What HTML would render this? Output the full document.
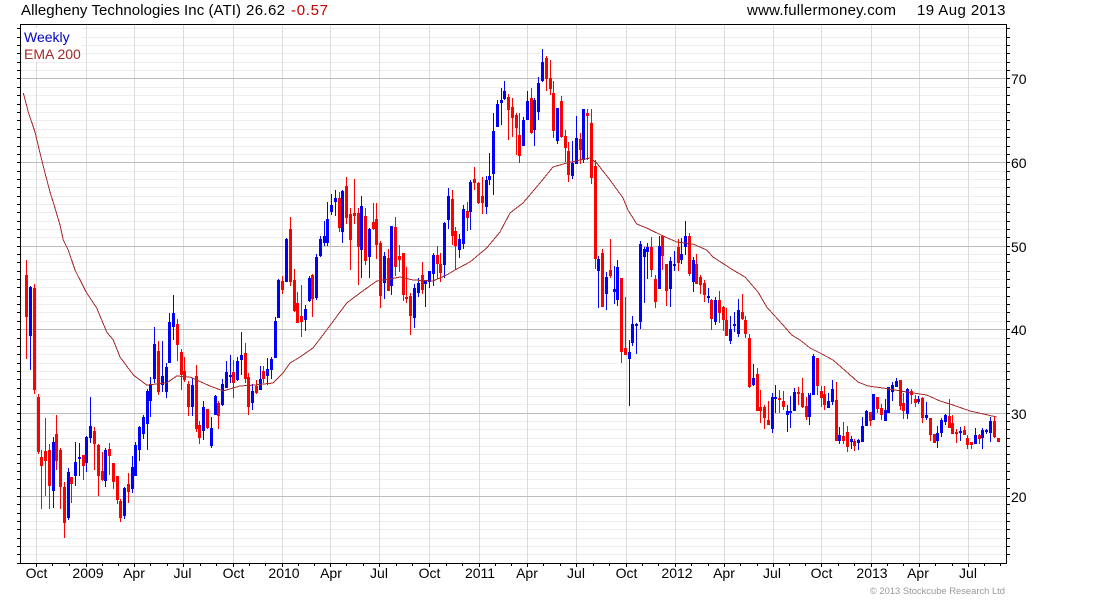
<!DOCTYPE html>
<html><head><meta charset="utf-8"><title>ATI</title>
<style>
html,body{margin:0;padding:0;background:#fff;width:1100px;height:600px;overflow:hidden}
svg{display:block;position:absolute;left:0;top:0}
text{font-family:"Liberation Sans",Arial,sans-serif;font-size:14px;fill:#000}
.c{shape-rendering:crispEdges;fill:none;stroke-width:1}
.m{text-anchor:middle}
</style></head><body>
<svg width="1100" height="600" viewBox="0 0 1100 600" xmlns="http://www.w3.org/2000/svg">
<rect width="1100" height="600" fill="#fff"/>
<path class="c" stroke="#eeeeee" d="M21 554.5H1006M21 546.5H1006M21 538.5H1006M21 529.5H1006M21 521.5H1006M21 513.5H1006M21 504.5H1006M21 488.5H1006M21 479.5H1006M21 471.5H1006M21 463.5H1006M21 454.5H1006M21 446.5H1006M21 438.5H1006M21 429.5H1006M21 421.5H1006M21 404.5H1006M21 396.5H1006M21 388.5H1006M21 379.5H1006M21 371.5H1006M21 363.5H1006M21 354.5H1006M21 346.5H1006M21 338.5H1006M21 321.5H1006M21 312.5H1006M21 304.5H1006M21 296.5H1006M21 287.5H1006M21 279.5H1006M21 271.5H1006M21 262.5H1006M21 254.5H1006M21 237.5H1006M21 229.5H1006M21 221.5H1006M21 212.5H1006M21 204.5H1006M21 196.5H1006M21 187.5H1006M21 179.5H1006M21 171.5H1006M21 154.5H1006M21 146.5H1006M21 137.5H1006M21 129.5H1006M21 120.5H1006M21 112.5H1006M21 104.5H1006M21 95.5H1006M21 87.5H1006M21 70.5H1006M21 62.5H1006M21 53.5H1006M21 45.5H1006M21 37.5H1006M21 28.5H1006"/>
<path class="c" stroke="#dcdcdc" d="M36.5 25V563M86.5 25V563M134.5 25V563M183.5 25V563M233.5 25V563M282.5 25V563M330.5 25V563M379.5 25V563M429.5 25V563M479.5 25V563M527.5 25V563M576.5 25V563M626.5 25V563M675.5 25V563M724.5 25V563M773.5 25V563M821.5 25V563M871.5 25V563M919.5 25V563M968.5 25V563"/>
<path class="c" stroke="#bcbcbc" d="M21 496.5H1006M21 413.5H1006M21 329.5H1006M21 246.5H1006M21 162.5H1006M21 78.5H1006"/>
<rect x="22" y="28" width="60" height="34" fill="#fff"/>

<path class="c" stroke="#0000ff" d="M30.5 286V370M29.5 287V336M31.5 287V336M53.5 437V508M52.5 442V491M54.5 442V491M68.5 468V520M67.5 472V518M69.5 472V518M75.5 442V486M74.5 462V476M76.5 462V476M79.5 443V476M78.5 457V459M80.5 457V459M86.5 436V472M85.5 437V463M87.5 437V463M90.5 397V443M89.5 426V438M91.5 426V438M105.5 448V487M104.5 450V481M106.5 450V481M124.5 487V519M123.5 488V516M125.5 488V516M132.5 456V493M131.5 467V489M133.5 467V489M135.5 442V476M134.5 445V476M136.5 445V476M139.5 426V461M138.5 427V450M140.5 427V450M143.5 415V439M142.5 417V434M144.5 417V434M147.5 389V450M146.5 391V424M148.5 391V424M150.5 377V417M149.5 384V401M151.5 384V401M154.5 327V383M153.5 344V379M155.5 344V379M162.5 341V392M161.5 376V385M163.5 376V385M166.5 363V398M165.5 367V392M167.5 367V392M169.5 313V363M168.5 322V363M170.5 322V363M173.5 295V340M172.5 313V327M174.5 313V327M192.5 378V416M191.5 385V407M193.5 385V407M203.5 401V440M202.5 407V431M204.5 407V431M211.5 417V448M210.5 428V446M212.5 428V446M215.5 395V415M214.5 396V415M216.5 396V415M222.5 379V406M221.5 384V405M223.5 384V405M226.5 361V388M225.5 372V388M227.5 372V388M230.5 355V383M229.5 375V377M231.5 375V377M237.5 357V381M236.5 361V380M238.5 361V380M241.5 332V375M240.5 355V360M242.5 355V360M252.5 384V410M251.5 391V403M253.5 391V403M260.5 366V390M259.5 379V390M261.5 379V390M267.5 358V385M266.5 369V376M268.5 369V376M271.5 357V379M270.5 359V370M272.5 359V370M275.5 317V358M274.5 321V358M276.5 321V358M278.5 279V318M277.5 280V318M279.5 280V318M286.5 238V282M285.5 239V282M287.5 239V282M305.5 305V331M304.5 309V320M306.5 309V320M309.5 276V302M308.5 278V301M310.5 278V301M316.5 254V300M315.5 257V298M317.5 257V298M320.5 236V257M319.5 239V256M321.5 239V256M324.5 221V246M323.5 236V243M325.5 236V243M327.5 202V246M326.5 219V243M328.5 219V243M331.5 194V215M330.5 205V212M332.5 205V212M335.5 190V216M334.5 198V202M336.5 198V202M342.5 190V243M341.5 191V232M343.5 191V232M361.5 196V278M360.5 206V250M362.5 206V250M369.5 228V278M368.5 229V257M370.5 229V257M384.5 252V299M383.5 256V283M385.5 256V283M391.5 226V295M390.5 226V286M392.5 226V286M414.5 284V328M413.5 288V318M415.5 288V318M418.5 278V297M417.5 283V293M419.5 283V293M425.5 280V307M424.5 280V284M426.5 280V284M429.5 271V288M428.5 271V282M430.5 271V282M433.5 253V286M432.5 255V274M434.5 255V274M444.5 222V278M443.5 223V265M445.5 223V265M448.5 188V229M447.5 196V220M449.5 196V220M459.5 234V258M458.5 239V250M460.5 239V250M463.5 205V249M462.5 209V244M464.5 209V244M470.5 180V230M469.5 182V212M471.5 182V212M486.5 176V214M485.5 180V207M487.5 180V207M489.5 153V185M488.5 176V180M490.5 176V180M493.5 113V195M492.5 131V174M494.5 131V174M497.5 100V127M496.5 104V127M498.5 104V127M501.5 88V125M500.5 100V103M502.5 100V103M504.5 81V100M503.5 91V99M505.5 91V99M523.5 117V146M522.5 120V146M524.5 120V146M527.5 91V120M526.5 101V120M528.5 101V120M534.5 98V146M533.5 100V130M535.5 100V130M538.5 77V120M537.5 83V112M539.5 83V112M542.5 49V82M541.5 62V81M543.5 62V81M557.5 108V144M556.5 108V141M558.5 108V141M572.5 141V179M571.5 163V176M573.5 163V176M576.5 116V164M575.5 138V164M577.5 138V164M583.5 109V163M582.5 109V160M584.5 109V160M598.5 256V308M597.5 259V271M599.5 259V271M606.5 272V310M605.5 277V294M607.5 277V294M614.5 266V304M613.5 289V292M615.5 289V292M617.5 260V306M616.5 267V300M618.5 267V300M629.5 340V406M628.5 352V359M630.5 352V359M632.5 316V346M631.5 324V343M633.5 324V343M636.5 323V354M635.5 324V326M637.5 324V326M640.5 241V329M639.5 244V322M641.5 244V322M644.5 247V303M643.5 249V257M645.5 249V257M647.5 243V279M646.5 247V252M648.5 247V252M659.5 236V289M658.5 246V289M660.5 246V289M670.5 257V307M669.5 261V289M671.5 261V289M674.5 251V271M673.5 264V266M675.5 264V266M681.5 238V264M680.5 254V260M682.5 254V260M685.5 221V255M684.5 236V247M686.5 236V247M693.5 257V292M692.5 260V282M694.5 260V282M708.5 288V303M707.5 296V298M709.5 296V298M715.5 297V325M714.5 300V322M716.5 300V322M730.5 316V344M729.5 329V341M731.5 329V341M734.5 312V332M733.5 324V326M735.5 324V326M738.5 299V337M737.5 310V334M739.5 310V334M753.5 364V386M752.5 378V385M754.5 378V385M772.5 393V433M771.5 397V429M773.5 397V429M775.5 385V413M774.5 397V399M776.5 397V399M787.5 405V432M786.5 411V415M788.5 411V415M790.5 396V428M789.5 411V413M791.5 411V413M794.5 388V411M793.5 392V411M795.5 392V411M809.5 395V425M808.5 393V417M810.5 393V417M813.5 354V395M812.5 356V395M814.5 356V395M828.5 393V408M827.5 401V408M829.5 401V408M832.5 380V405M831.5 389V402M833.5 389V402M839.5 427V444M838.5 435V441M840.5 435V441M851.5 436V449M850.5 439V442M852.5 439V442M858.5 439V450M857.5 440V443M859.5 440V443M862.5 417V442M861.5 426V442M863.5 426V442M866.5 410V426M865.5 411V426M867.5 411V426M873.5 394V420M872.5 394V420M874.5 394V420M885.5 399V421M884.5 410V421M886.5 410V421M888.5 387V413M887.5 387V413M889.5 387V413M892.5 382V401M891.5 385V392M893.5 385V392M896.5 378V387M895.5 381V387M897.5 381V387M907.5 388V419M906.5 389V414M908.5 389V414M918.5 396V404M917.5 399V402M919.5 399V402M926.5 402V420M925.5 415V418M927.5 415V418M937.5 426V448M936.5 433V441M938.5 433V441M941.5 418V437M940.5 420V433M942.5 420V433M945.5 414V425M944.5 415V422M946.5 415V422M960.5 427V441M959.5 431V433M961.5 431V433M975.5 428V444M974.5 435V444M976.5 435V444M982.5 428V449M981.5 430V438M983.5 430V438M986.5 429V434M985.5 430V432M987.5 430V432M990.5 417V442M989.5 421V433M991.5 421V433"/>

<path class="c" stroke="#ff0000" d="M26.5 260V359M25.5 275V317M27.5 275V317M34.5 284V394M33.5 288V390M35.5 288V390M38.5 394V454M37.5 397V452M39.5 397V452M41.5 450V509M40.5 457V466M42.5 457V466M45.5 418V496M44.5 451V461M46.5 451V461M49.5 444V509M48.5 450V486M50.5 450V486M56.5 415V470M55.5 434V461M57.5 434V461M60.5 448V509M59.5 450V487M61.5 450V487M64.5 482V538M63.5 487V523M65.5 487V523M71.5 477V503M70.5 477V484M72.5 477V484M83.5 455V480M82.5 455V466M84.5 455V466M94.5 427V470M93.5 431V444M95.5 431V444M98.5 444V496M97.5 445V476M99.5 445V476M102.5 452V481M101.5 471V480M103.5 471V480M109.5 443V475M108.5 449V456M110.5 449V456M113.5 463V489M112.5 463V482M114.5 463V482M117.5 476V504M116.5 476V500M118.5 476V500M120.5 499V522M119.5 501V518M121.5 501V518M128.5 473V503M127.5 484V492M129.5 484V492M158.5 341V395M157.5 351V392M159.5 351V392M177.5 319V361M176.5 324V345M178.5 324V345M181.5 349V390M180.5 352V375M182.5 352V375M184.5 357V382M183.5 371V380M185.5 371V380M188.5 381V416M187.5 384V407M189.5 384V407M196.5 365V432M195.5 376V429M197.5 376V429M199.5 421V444M198.5 425V438M200.5 425V438M207.5 409V429M206.5 409V428M208.5 409V428M218.5 401V429M217.5 403V416M219.5 403V416M233.5 360V398M232.5 372V383M234.5 372V383M245.5 343V383M244.5 353V379M246.5 353V379M248.5 373V415M247.5 377V407M249.5 377V407M256.5 380V394M255.5 386V393M257.5 386V393M263.5 366V383M262.5 371V379M264.5 371V379M282.5 276V294M281.5 281V290M283.5 281V290M290.5 217V286M289.5 229V282M291.5 229V282M294.5 269V312M293.5 280V311M295.5 280V311M297.5 292V323M296.5 303V323M298.5 303V323M301.5 285V337M300.5 316V322M302.5 316V322M312.5 274V317M311.5 275V299M313.5 275V299M339.5 192V232M338.5 198V228M340.5 198V228M346.5 177V224M345.5 186V218M347.5 186V218M350.5 208V270M349.5 214V240M351.5 214V240M354.5 179V224M353.5 213V216M355.5 213V216M358.5 208V285M357.5 213V247M359.5 213V247M365.5 208V265M364.5 216V261M366.5 216V261M373.5 203V230M372.5 222V229M374.5 222V229M376.5 203V259M375.5 219V245M377.5 219V245M380.5 241V308M379.5 243V296M381.5 243V296M388.5 249V291M387.5 258V291M389.5 258V291M395.5 217V276M394.5 227V267M396.5 227V267M399.5 245V272M398.5 256V260M400.5 256V260M403.5 253V301M402.5 253V295M404.5 253V295M406.5 267V303M405.5 297V299M407.5 297V299M410.5 293V335M409.5 296V316M411.5 296V316M422.5 262V294M421.5 275V290M423.5 275V290M437.5 246V279M436.5 255V264M438.5 255V264M440.5 253V282M439.5 264V273M441.5 264V273M452.5 190V245M451.5 199V236M453.5 199V236M455.5 227V270M454.5 231V246M456.5 231V246M467.5 202V231M466.5 211V218M468.5 211V218M474.5 167V190M473.5 179V183M475.5 179V183M478.5 182V204M477.5 183V203M479.5 183V203M482.5 177V214M481.5 196V203M483.5 196V203M508.5 94V140M507.5 97V110M509.5 97V110M512.5 98V137M511.5 107V118M513.5 107V118M516.5 113V155M515.5 115V128M517.5 115V128M519.5 113V163M518.5 135V156M520.5 135V156M531.5 88V134M530.5 98V133M532.5 98V133M546.5 56V91M545.5 58V79M547.5 58V79M550.5 60V95M549.5 78V89M551.5 78V89M553.5 81V138M552.5 93V131M554.5 93V131M561.5 96V138M560.5 101V137M562.5 101V137M565.5 130V162M564.5 136V148M566.5 136V148M568.5 142V182M567.5 151V175M569.5 151V175M580.5 133V164M579.5 139V150M581.5 139V150M587.5 109V160M586.5 113V116M588.5 113V116M591.5 109V184M590.5 123V178M592.5 123V178M595.5 160V269M594.5 166V259M596.5 166V259M602.5 249V307M601.5 253V307M603.5 253V307M610.5 239V278M609.5 270V276M611.5 270V276M621.5 278V363M620.5 278V352M622.5 278V352M625.5 297V355M624.5 348V355M626.5 348V355M651.5 237V277M650.5 247V270M652.5 247V270M655.5 275V308M654.5 279V302M656.5 279V302M662.5 235V270M661.5 236V256M663.5 236V256M666.5 264V306M665.5 264V291M667.5 264V291M678.5 239V271M677.5 247V263M679.5 247V263M689.5 233V276M688.5 236V274M690.5 236V274M696.5 254V284M695.5 264V284M697.5 264V284M700.5 275V294M699.5 277V285M701.5 277V285M704.5 280V302M703.5 283V295M705.5 283V295M711.5 299V330M710.5 300V319M712.5 300V319M719.5 291V323M718.5 300V313M720.5 300V313M723.5 306V331M722.5 307V320M724.5 307V320M726.5 308V336M725.5 320V336M727.5 320V336M742.5 294V320M741.5 312V319M743.5 312V319M745.5 316V338M744.5 320V334M746.5 320V334M749.5 334V388M748.5 338V387M750.5 338V387M757.5 368V411M756.5 374V411M758.5 374V411M760.5 390V423M759.5 407V411M761.5 407V411M764.5 405V429M763.5 407V418M765.5 407V418M768.5 401V425M767.5 420V425M769.5 420V425M779.5 390V413M778.5 398V400M780.5 398V400M783.5 391V410M782.5 401V407M784.5 401V407M798.5 387V405M797.5 392V394M799.5 392V394M802.5 378V408M801.5 393V407M803.5 393V407M806.5 397V420M805.5 406V417M807.5 406V417M817.5 358V395M816.5 358V386M818.5 358V386M821.5 386V407M820.5 391V398M822.5 391V398M824.5 386V410M823.5 394V405M825.5 394V405M836.5 382V441M835.5 400V441M837.5 400V441M843.5 422V444M842.5 436V441M844.5 436V441M847.5 426V452M846.5 432V447M848.5 432V447M854.5 439V451M853.5 441V446M855.5 441V446M870.5 412V426M869.5 412V421M871.5 412V421M877.5 397V413M876.5 397V409M878.5 397V409M881.5 404V420M880.5 408V415M882.5 408V415M900.5 380V410M899.5 380V406M901.5 380V406M903.5 393V419M902.5 403V411M904.5 403V411M911.5 389V404M910.5 391V395M912.5 391V395M915.5 395V407M914.5 399V403M916.5 399V403M922.5 397V423M921.5 398V418M923.5 398V418M930.5 418V441M929.5 418V435M931.5 418V435M934.5 434V443M933.5 434V443M935.5 434V443M949.5 399V428M948.5 416V428M950.5 416V428M952.5 415V434M951.5 423V434M953.5 423V434M956.5 429V443M955.5 432V434M957.5 432V434M964.5 426V435M963.5 430V435M965.5 430V435M967.5 435V449M966.5 438V445M968.5 438V445M971.5 442V449M970.5 442V445M972.5 442V445M979.5 434V444M978.5 435V439M980.5 435V439M994.5 417V438M993.5 421V437M995.5 421V437M998.5 438V442M997.5 438V442M999.5 438V442"/>

<polyline class="c" stroke="#a52a2a" stroke-width="1.3" points="23.3,93 28.3,112 35,132 40,153 45,173 50,192 55,208 60,225 63.3,240 68.3,250 75,270 86.7,293 96.7,308 106.7,332 113.3,340 120,357 133.3,375 146.7,385 156.7,384 166.7,383 176.7,376 190,377 210,386 223.3,391 233,388 240,386 255,385 273,383 283,373 290,363 300,357 313,348 326.7,330 346.7,303 360,293 376.7,281 390,279 400,277 413,280 433,281 446.7,275 456.7,269 470,262 486.7,248 500,232 510,213 523,203 540,183 553,167 566.7,163 580,160 590,158 596.7,163 610,180 623,198 628,210 636.7,224 646.7,228 663,236 676.7,242 693,244 706.7,250 713,257 733,270 745,277 758,292 766.7,307 783,325 791.7,335 800,340 810,348 820,353 833,360 846.7,372 858,382 868,386 883,388 906.7,392 926.7,395 940,401 953,405 970,411 996.7,417"/>

<path class="c" stroke="#000" d="M20.5 24.5H1006.5V563.5H20.5ZM17 554.5H20M17 546.5H20M17 538.5H20M17 529.5H20M17 521.5H20M17 513.5H20M17 504.5H20M17 496.5H20M17 488.5H20M17 479.5H20M17 471.5H20M17 463.5H20M17 454.5H20M17 446.5H20M17 438.5H20M17 429.5H20M17 421.5H20M17 413.5H20M17 404.5H20M17 396.5H20M17 388.5H20M17 379.5H20M17 371.5H20M17 363.5H20M17 354.5H20M17 346.5H20M17 338.5H20M17 329.5H20M17 321.5H20M17 312.5H20M17 304.5H20M17 296.5H20M17 287.5H20M17 279.5H20M17 271.5H20M17 262.5H20M17 254.5H20M17 246.5H20M17 237.5H20M17 229.5H20M17 221.5H20M17 212.5H20M17 204.5H20M17 196.5H20M17 187.5H20M17 179.5H20M17 171.5H20M17 162.5H20M17 154.5H20M17 146.5H20M17 137.5H20M17 129.5H20M17 120.5H20M17 112.5H20M17 104.5H20M17 95.5H20M17 87.5H20M17 78.5H20M17 70.5H20M17 62.5H20M17 53.5H20M17 45.5H20M17 37.5H20M17 28.5H20M17 563.5H20M1007 554.5H1010M1007 546.5H1010M1007 538.5H1010M1007 529.5H1010M1007 521.5H1010M1007 513.5H1010M1007 504.5H1010M1007 496.5H1010M1007 488.5H1010M1007 479.5H1010M1007 471.5H1010M1007 463.5H1010M1007 454.5H1010M1007 446.5H1010M1007 438.5H1010M1007 429.5H1010M1007 421.5H1010M1007 413.5H1010M1007 404.5H1010M1007 396.5H1010M1007 388.5H1010M1007 379.5H1010M1007 371.5H1010M1007 363.5H1010M1007 354.5H1010M1007 346.5H1010M1007 338.5H1010M1007 329.5H1010M1007 321.5H1010M1007 312.5H1010M1007 304.5H1010M1007 296.5H1010M1007 287.5H1010M1007 279.5H1010M1007 271.5H1010M1007 262.5H1010M1007 254.5H1010M1007 246.5H1010M1007 237.5H1010M1007 229.5H1010M1007 221.5H1010M1007 212.5H1010M1007 204.5H1010M1007 196.5H1010M1007 187.5H1010M1007 179.5H1010M1007 171.5H1010M1007 162.5H1010M1007 154.5H1010M1007 146.5H1010M1007 137.5H1010M1007 129.5H1010M1007 120.5H1010M1007 112.5H1010M1007 104.5H1010M1007 95.5H1010M1007 87.5H1010M1007 78.5H1010M1007 70.5H1010M1007 62.5H1010M1007 53.5H1010M1007 45.5H1010M1007 37.5H1010M1007 28.5H1010M36.5 564V567M86.5 564V567M134.5 564V567M183.5 564V567M233.5 564V567M282.5 564V567M330.5 564V567M379.5 564V567M429.5 564V567M479.5 564V567M527.5 564V567M576.5 564V567M626.5 564V567M675.5 564V567M724.5 564V567M773.5 564V567M821.5 564V567M871.5 564V567M919.5 564V567M968.5 564V567M52.5 564V566M69.5 564V566M102.5 564V566M118.5 564V566M150.5 564V566M167.5 564V566M200.5 564V566M216.5 564V566M249.5 564V566M265.5 564V566M298.5 564V566M314.5 564V566M346.5 564V566M363.5 564V566M396.5 564V566M412.5 564V566M446.5 564V566M462.5 564V566M495.5 564V566M511.5 564V566M543.5 564V566M560.5 564V566M593.5 564V566M609.5 564V566M642.5 564V566M658.5 564V566M691.5 564V566M708.5 564V566M740.5 564V566M757.5 564V566M789.5 564V566M805.5 564V566M838.5 564V566M854.5 564V566M887.5 564V566M903.5 564V566M935.5 564V566M952.5 564V566M984.5 564V566M1000.5 564V566"/>

<text x="21" y="15" style="font-size:15px" textLength="220" lengthAdjust="spacing">Allegheny Technologies Inc (ATI)</text>
<text x="246" y="15" style="font-size:15px" textLength="39" lengthAdjust="spacing">26.62</text>
<text x="291" y="15" style="font-size:15px;fill:#c00000" textLength="37" lengthAdjust="spacing">-0.57</text>
<text x="747" y="15" style="font-size:15px" textLength="149" lengthAdjust="spacing">www.fullermoney.com</text>
<text x="917" y="15" style="font-size:15px" textLength="88.5" lengthAdjust="spacing">19 Aug 2013</text>
<text x="24" y="42" style="fill:#0000cc">Weekly</text>
<text x="24" y="59" style="fill:#a52a2a">EMA 200</text>
<text x="1011" y="84">70</text>
<text x="1011" y="168">60</text>
<text x="1011" y="252">50</text>
<text x="1011" y="335">40</text>
<text x="1011" y="419">30</text>
<text x="1011" y="502">20</text>
<text class="m" x="36.5" y="578">Oct</text>
<text class="m" x="88" y="578">2009</text>
<text class="m" x="134" y="578">Apr</text>
<text class="m" x="182.5" y="578">Jul</text>
<text class="m" x="233.5" y="578">Oct</text>
<text class="m" x="284" y="578">2010</text>
<text class="m" x="331" y="578">Apr</text>
<text class="m" x="379" y="578">Jul</text>
<text class="m" x="429.5" y="578">Oct</text>
<text class="m" x="480" y="578">2011</text>
<text class="m" x="527" y="578">Apr</text>
<text class="m" x="576" y="578">Jul</text>
<text class="m" x="626.5" y="578">Oct</text>
<text class="m" x="677" y="578">2012</text>
<text class="m" x="724" y="578">Apr</text>
<text class="m" x="772" y="578">Jul</text>
<text class="m" x="821.5" y="578">Oct</text>
<text class="m" x="872" y="578">2013</text>
<text class="m" x="918" y="578">Apr</text>
<text class="m" x="968" y="578">Jul</text>
<text x="1005" y="594" text-anchor="end" style="font-size:9.4px;fill:#999">© 2013 Stockcube Research Ltd</text>
</svg>
</body></html>
